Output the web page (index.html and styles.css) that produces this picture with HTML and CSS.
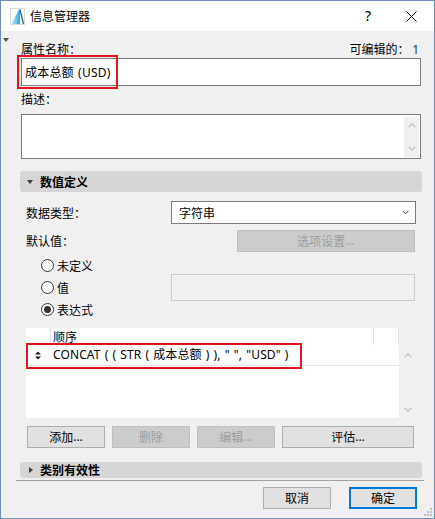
FILE: index.html
```html
<!DOCTYPE html>
<html lang="zh">
<head>
<meta charset="utf-8">
<title>信息管理器</title>
<link rel="stylesheet" href="styles.css">
</head>
<body>
<div class="window">
  <div class="titlebar">
    <svg class="app-icon" width="15" height="17" viewBox="0 0 15 17">
      <defs>
        <linearGradient id="ag" x1="0" y1="0" x2="1" y2="0">
          <stop offset="0" stop-color="#b9ecfb"/>
          <stop offset="1" stop-color="#22a9e2"/>
        </linearGradient>
      </defs>
      <rect x="0.5" y="0.5" width="14" height="16" fill="#fff" stroke="#d8d8d8"/>
      <polygon points="1.5,16 9,1.5 10,1.5 10,16" fill="url(#ag)"/>
      <line x1="10" y1="1.5" x2="13.5" y2="16" stroke="#1d5a96" stroke-width="1.2"/>
    </svg>
    <span class="title">信息管理器</span>
    <span class="help latin">?</span>
    <svg class="close" width="11" height="11" viewBox="0 0 11 11">
      <path d="M0.5 0.5 L10.5 10.5 M10.5 0.5 L0.5 10.5" stroke="#000" stroke-width="1"/>
    </svg>
  </div>

  <div class="content">
    <span class="collapse-mark"></span>

    <div class="label-row">
      <span>属性名称：</span>
      <span>可编辑的： <span class="count latin">1</span></span>
    </div>
    <div class="field name-field">
      <span class="latin">成本总额 (USD)</span>
      <span class="hl name-hl"></span>
    </div>

    <div class="plain-label desc-label">描述：</div>
    <div class="textarea">
      <div class="vscroll">
        <svg width="8" height="5" viewBox="0 0 8 5"><path d="M0.7 4.3 L4 1 L7.3 4.3" fill="none" stroke="#c6c6c6" stroke-width="1.6"/></svg>
        <svg width="8" height="5" viewBox="0 0 8 5"><path d="M0.7 0.7 L4 4 L7.3 0.7" fill="none" stroke="#c6c6c6" stroke-width="1.6"/></svg>
      </div>
    </div>

    <div class="section section-open"><span class="tri-down"></span>数值定义</div>

    <div class="value-def">
      <div class="type-row">
        <span class="col-label">数据类型：</span>
        <div class="select">
          <span>字符串</span>
          <svg width="7" height="5" viewBox="0 0 7 5"><path d="M0.5 0.8 L3.5 3.8 L6.5 0.8" fill="none" stroke="#333" stroke-width="1"/></svg>
        </div>
      </div>
      <div class="default-row">
        <span class="col-label">默认值：</span>
        <div class="btn disabled options-btn">选项设置<span class="latin">...</span></div>
      </div>
      <div class="radio-area">
        <div class="radios">
          <div class="radio"><span class="circle"></span><span>未定义</span></div>
          <div class="radio"><span class="circle"></span><span>值</span></div>
          <div class="radio"><span class="circle checked"></span><span>表达式</span></div>
        </div>
        <div class="value-field"></div>
      </div>

      <div class="list-wrap">
        <div class="list">
          <div class="list-head">
            <span class="h0"></span>
            <span class="h1">顺序</span>
            <span class="h2"></span>
          </div>
          <div class="list-row">
            <span class="c0">
              <svg width="6" height="9" viewBox="0 0 6 9"><path d="M0 3.6 L3 0.4 L6 3.6 Z M0 5.4 L6 5.4 L3 8.6 Z" fill="#1a1a1a"/></svg>
            </span>
            <span class="c1 latin">CONCAT ( ( STR ( 成本总额 ) ), " ", "USD" )</span>
          </div>
          <span class="hl row-hl"></span>
        </div>
        <div class="list-scroll">
          <svg width="8" height="5" viewBox="0 0 8 5"><path d="M0.7 4.3 L4 1 L7.3 4.3" fill="none" stroke="#c6c6c6" stroke-width="1.6"/></svg>
          <svg width="8" height="5" viewBox="0 0 8 5"><path d="M0.7 0.7 L4 4 L7.3 0.7" fill="none" stroke="#c6c6c6" stroke-width="1.6"/></svg>
        </div>
      </div>

      <div class="btn-row">
        <div class="btn w78">添加<span class="latin">...</span></div>
        <div class="btn disabled w78">删除</div>
        <div class="btn disabled w78">编辑<span class="latin">...</span></div>
        <div class="btn w132">评估<span class="latin">...</span></div>
      </div>
    </div>

    <div class="section section-closed"><span class="tri-right"></span>类别有效性</div>
    <div class="separator"></div>

    <div class="footer">
      <div class="btn w68">取消</div>
      <div class="btn w68 default">确定</div>
    </div>

    <svg class="grip" width="9" height="9" viewBox="0 0 9 9">
      <rect x="6" y="0" width="2" height="2" fill="#bdbdbd"/>
      <rect x="3" y="3" width="2" height="2" fill="#bdbdbd"/>
      <rect x="6" y="3" width="2" height="2" fill="#bdbdbd"/>
      <rect x="0" y="6" width="2" height="2" fill="#bdbdbd"/>
      <rect x="3" y="6" width="2" height="2" fill="#bdbdbd"/>
      <rect x="6" y="6" width="2" height="2" fill="#bdbdbd"/>
    </svg>
  </div>
</div>
</body>
</html>
```

FILE: styles.css
```css
* {
  box-sizing: border-box;
  margin: 0;
  padding: 0;
}

html, body {
  width: 435px;
  height: 519px;
  overflow: hidden;
}

body {
  font-family: "Noto Sans CJK SC", sans-serif;
  font-size: 12px;
  color: #000;
  background: #fff;
}

.latin {
  font-family: "Noto Sans", "Noto Sans CJK SC", sans-serif;
}

.window {
  width: 435px;
  height: 519px;
  border: 1px solid #6f8fb8;
  display: flex;
  flex-direction: column;
}

/* title bar */
.titlebar {
  height: 30px;
  flex: none;
  background: #fff;
  display: flex;
  align-items: center;
}

.app-icon {
  margin-left: 9px;
  flex: none;
}

.title {
  margin-left: 5px;
  font-size: 12px;
  line-height: 16px;
}

.help {
  margin-left: auto;
  font-size: 14px;
  line-height: 16px;
}

.close {
  margin-left: 35px;
  margin-right: 17px;
  flex: none;
}

/* main content */
.content {
  flex: 1;
  background: #f0f0f0;
  padding: 0 13px 0 20px;
  position: relative;
  display: flex;
  flex-direction: column;
}

.collapse-mark {
  position: absolute;
  left: 2px;
  top: 7px;
  width: 0;
  height: 0;
  border-left: 3px solid transparent;
  border-right: 3px solid transparent;
  border-top: 4px solid #4f4f4f;
}

.label-row {
  margin-top: 10px;
  height: 16px;
  line-height: 16px;
  display: flex;
  justify-content: space-between;
  padding-right: 2px;
}

.count {
  color: #1f3a6e;
}

.field {
  margin-top: 1px;
  height: 28px;
  border: 1px solid #7a7a7a;
  background: #fff;
  padding-left: 3px;
  line-height: 26px;
  position: relative;
}

.name-field .latin {
  word-spacing: 1px;
  letter-spacing: 0.2px;
}

.hl {
  position: absolute;
  border: 2px solid #e5131d;
}

.name-hl {
  left: -5px;
  top: -4px;
  width: 101px;
  height: 34px;
}

.plain-label {
  height: 16px;
  line-height: 16px;
}

.desc-label {
  margin-top: 5px;
}

.textarea {
  margin-top: 7px;
  height: 45px;
  border: 1px solid #7a7a7a;
  background: #fff;
  position: relative;
}

.vscroll {
  position: absolute;
  right: 1px;
  top: 2px;
  bottom: 1px;
  width: 15px;
  background: #f0f0f0;
  display: flex;
  flex-direction: column;
  align-items: center;
  justify-content: space-between;
  padding: 6px 0 6px;
}

/* collapsible section headers */
.section {
  margin-left: -1px;
  margin-right: -1px;
  background: #d6d6d6;
  border-radius: 3px;
  display: flex;
  align-items: center;
  font-weight: bold;
  line-height: 16px;
}

.section-open {
  margin-top: 12px;
  height: 21px;
  padding-left: 7px;
}

.tri-down {
  width: 0;
  height: 0;
  border-left: 3px solid transparent;
  border-right: 3px solid transparent;
  border-top: 4px solid #3a3a3a;
  margin-right: 7px;
}

.section-closed {
  margin-top: 14px;
  height: 16px;
  padding-left: 9px;
}

.tri-right {
  width: 0;
  height: 0;
  border-top: 3px solid transparent;
  border-bottom: 3px solid transparent;
  border-left: 4px solid #3a3a3a;
  margin-right: 7px;
}

/* value definition */
.value-def {
  padding: 0 5px;
  display: flex;
  flex-direction: column;
}

.type-row {
  margin-top: 9px;
  height: 23px;
  display: flex;
  align-items: center;
}

.col-label {
  width: 145px;
  flex: none;
  line-height: 16px;
}

.select {
  flex: 1;
  height: 23px;
  border: 1px solid #7a7a7a;
  background: #fff;
  padding: 0 6px 0 7px;
  display: flex;
  align-items: center;
  justify-content: space-between;
}

.default-row {
  margin-top: 6px;
  height: 22px;
  display: flex;
  align-items: center;
  justify-content: space-between;
}

.btn {
  height: 22px;
  border: 1px solid #adadad;
  background: #e1e1e1;
  display: flex;
  align-items: center;
  justify-content: center;
  line-height: 16px;
  flex: none;
}

.btn.disabled {
  background: #cccccc;
  border-color: #bfbfbf;
  color: #9d9d9d;
}

.options-btn {
  width: 178px;
  margin-right: 1px;
}

.radio-area {
  margin-top: 2px;
  display: flex;
}

.radios {
  width: 145px;
  flex: none;
  padding-left: 15px;
}

.radio {
  height: 22px;
  display: flex;
  align-items: center;
}

.circle {
  width: 13px;
  height: 13px;
  border: 1px solid #333;
  border-radius: 50%;
  background: #fff;
  margin-right: 3px;
  display: flex;
  align-items: center;
  justify-content: center;
}

.circle.checked::after {
  content: "";
  width: 7px;
  height: 7px;
  border-radius: 50%;
  background: #333;
}

.value-field {
  margin-top: 20px;
  width: 244px;
  height: 27px;
  border: 1px solid #cccccc;
  background: #f0f0f0;
}

/* expression list */
.list-wrap {
  margin-top: 8px;
  height: 90px;
  display: flex;
}

.list {
  width: 373px;
  background: #fff;
  position: relative;
}

.list-head {
  height: 17px;
  display: flex;
  line-height: 17px;
}

.h0, .h2 {
  width: 25px;
  border-right: 1px solid #e3e3e3;
}

.h1 {
  width: 323px;
  border-right: 1px solid #e3e3e3;
  padding-left: 2px;
}

.list-row {
  height: 21px;
  display: flex;
  align-items: center;
  border-bottom: 1px solid #e3e3e3;
}

.c0 {
  width: 25px;
  padding-left: 9px;
  display: flex;
  align-items: center;
}

.c1 {
  padding-left: 2px;
  line-height: 16px;
  white-space: pre;
  word-spacing: 0.9px;
  letter-spacing: 0.1px;
}

.row-hl {
  left: 0;
  top: 15px;
  width: 276px;
  height: 26px;
}

.list-scroll {
  width: 17px;
  display: flex;
  flex-direction: column;
  align-items: center;
  justify-content: space-between;
  padding: 25px 0 6px;
}

.btn-row {
  margin-top: 8px;
  height: 22px;
  display: flex;
  gap: 7px;
  padding-left: 1px;
}

.w78 { width: 78px; }
.w132 { width: 132px; }
.w68 { width: 68px; }

.separator {
  margin-top: 2px;
  height: 1px;
  background: #a0a0a0;
  margin-left: -5px;
  margin-right: -3px;
}

.footer {
  margin-top: 6px;
  display: flex;
  justify-content: flex-end;
  gap: 18px;
  padding-right: 4px;
}

.btn.default {
  border: 2px solid #0078d7;
}

.grip {
  position: absolute;
  right: 1px;
  bottom: 1px;
}
```
